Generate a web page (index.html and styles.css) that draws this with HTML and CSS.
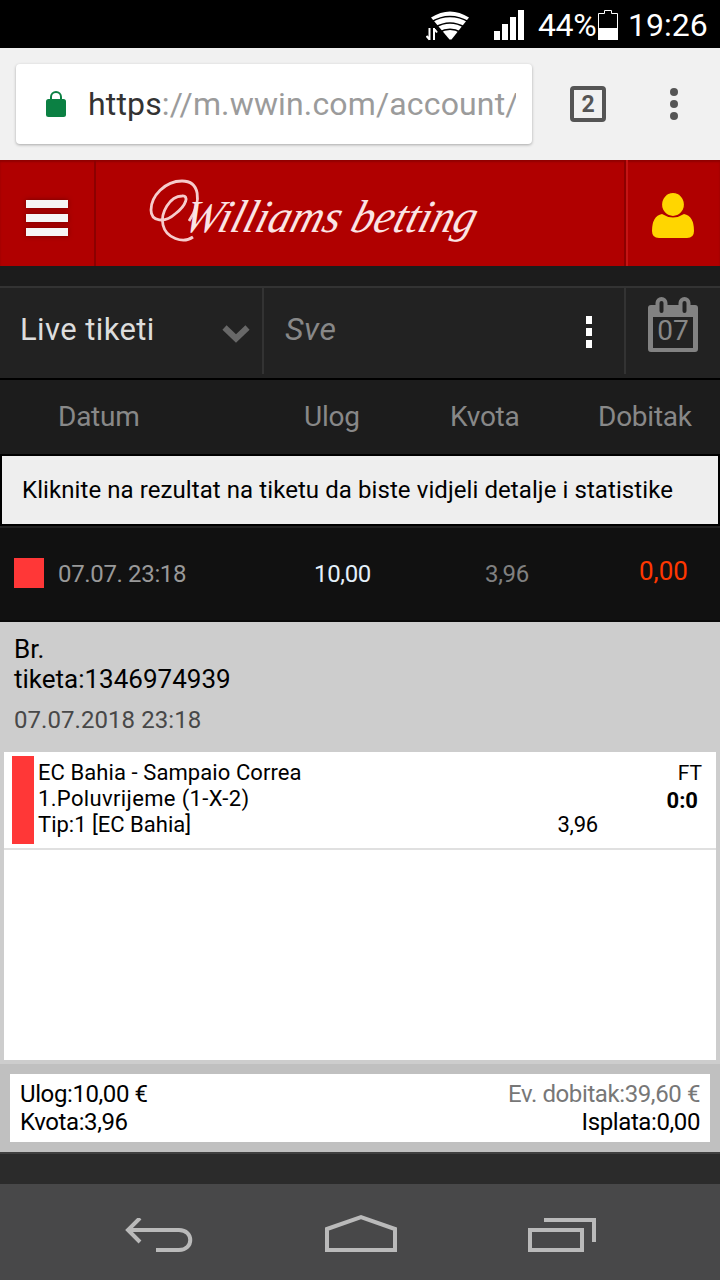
FILE: index.html
```html
<!DOCTYPE html>
<html lang="bs">
<head>
    <meta charset="UTF-8">
    <meta name="viewport" content="width=device-width, initial-scale=1.0">
    <title>Williams betting</title>
    <link rel="stylesheet" href="styles.css">
</head>
<body>
    <!-- Status bar -->
    <div class="status">
        <svg class="wifi" width="44" height="32" viewBox="0 0 44 32">
            <path d="M5 8.500Q24-3.500 43 8.500L25.500 30.500H23.500Z" fill="#fff"/>
            <path d="M5 13Q24 2 43 13M9 18.500Q24 9.500 39 18.500M13 23.500Q24 17 35 23.500" fill="none" stroke="#000" stroke-width="1.700"/>
            <path d="M0 18H9L13 23V32H0Z" fill="#000"/>
            <path d="M3.500 19V31M0.500 27L3.500 30.500M8 31V19M8 19.500L11 23.500" fill="none" stroke="#fff" stroke-width="2"/>
        </svg>
        <svg class="signal" width="30" height="30" viewBox="0 0 30 30" fill="#fff">
            <path d="M0 21h6v9H0zM8 14h6v16H8zM16 7h6v23h-6zM24 0h6v30h-6z"/>
        </svg>
        <span class="percent">44%</span>
        <svg class="battery" width="20" height="30" viewBox="0 0 20 30">
            <path d="M0.500 3.500H6.500V0.500H13.500V3.500H19.500V29.500H0.500Z" fill="none" stroke="#fff"/>
            <path d="M0 18h20v12H0z" fill="#fff"/>
        </svg>
        <span class="clock">19:26</span>
    </div>

    <!-- Browser bar -->
    <div class="browser">
        <div class="address">
            <svg width="20" height="26" viewBox="0 0 20 26">
                <path d="M5 9V6a5 5 0 0 1 10 0v3" fill="none" stroke="#0b8043" stroke-width="2"/>
                <rect y="8" width="20" height="18" rx="2.500" fill="#0b8043"/>
            </svg>
            <div class="url"><b>https</b>://m.wwin.com/account/</div>
        </div>
        <div class="tabs">2</div>
        <svg class="dots" width="8" height="32" viewBox="0 0 8 32" fill="#555">
            <circle cx="4" cy="4" r="4"/><circle cx="4" cy="16" r="4"/><circle cx="4" cy="28" r="4"/>
        </svg>
    </div>

    <!-- Site header -->
    <div class="header">
        <div class="menu-icon">
            <div></div>
            <div></div>
            <div></div>
        </div>
        <div class="brand">
            <svg width="350" height="100" viewBox="0 0 350 100">
                <path d="M44 57C58 36 54 17 37 17C20 17 6 32 6 46C6 58 20 59 30 50C42 41 44 31 37 32C25 32 15 49 18 61C21 74 38 80 48 73" fill="none" stroke="#f6cccc" stroke-width="2.800"/>
                <text class="logo-text" transform="translate(36 68) skewX(-16)" textLength="292" lengthAdjust="spacingAndGlyphs">Williams betting</text>
            </svg>
        </div>
        <div class="user">
            <svg width="44" height="48" viewBox="0 0 44 48" fill="#ffd600">
                <path d="M11 22Q1 24 1 39Q1 46 8 46H36Q43 46 43 39Q43 24 33 22Q22 29 11 22Z"/>
                <ellipse cx="22" cy="12.500" rx="11.500" ry="12" stroke="#b00000" stroke-width="1.200"/>
            </svg>
        </div>
    </div>

    <!-- Filters -->
    <div class="filters">
        <div class="select">
            <span>Live tiketi</span>
            <svg width="28" height="20" viewBox="0 0 28 20">
                <path d="M2.500 3.500L14 14.500L25.500 3.500" fill="none" stroke="#686868" stroke-width="6"/>
            </svg>
        </div>
        <div class="search">
            <i>Sve</i>
            <svg width="8" height="34" viewBox="0 0 8 34" fill="#fff">
                <path d="M1 1h6v8H1zM1 13h6v8H1zM1 25h6v8H1z"/>
            </svg>
        </div>
        <div class="calendar">
            <svg width="52" height="56" viewBox="0 0 52 56">
                <path d="M4 8H48Q51 8 51 11V52Q51 55 48 55H4Q1 55 1 52V11Q1 8 4 8ZM6 20V51H46V20Z" fill="#828282" fill-rule="evenodd"/>
                <path d="M14.500 14V6M37.500 14V6" fill="none" stroke="#828282" stroke-width="12" stroke-linecap="round"/>
                <path d="M14.500 14V6M37.500 14V6" fill="none" stroke="#222" stroke-width="4" stroke-linecap="round"/>
            </svg>
            <span>07</span>
        </div>
    </div>

    <!-- Ticket list -->
    <div class="columns">
        <span class="c-date">Datum</span>
        <span class="c-stake">Ulog</span>
        <span class="c-odds">Kvota</span>
        <span class="c-win">Dobitak</span>
    </div>
    <div class="note"><span>Kliknite na rezultat na tiketu da biste vidjeli detalje i statistike</span></div>
    <div class="ticket">
        <div class="lost"></div>
        <span class="t-date">07.07. 23:18</span>
        <span class="t-stake">10,00</span>
        <span class="t-odds">3,96</span>
        <span class="t-win">0,00</span>
    </div>

    <!-- Ticket details -->
    <div class="details">
        <div class="number">Br.<br><span>tiketa:1346974939</span></div>
        <div class="time">07.07.2018 23:18</div>
        <div class="bets">
            <div class="bet">
                <div class="mark"></div>
                <div class="match">
                    <div><span class="name">EC Bahia - Sampaio Correa</span></div>
                    <div><span class="market">1.Poluvrijeme (1-X-2)</span></div>
                    <div class="tip"><span>Tip:1 [EC Bahia]</span><span class="odds">3,96</span></div>
                </div>
                <div class="result">
                    <div class="period">FT</div>
                    <div class="score">0:0</div>
                </div>
            </div>
        </div>
    </div>
    <div class="total">
        <div class="sum">
            <div><span>Ulog:10,00 €</span><span class="possible">Ev. dobitak:39,60 €</span></div>
            <div><span>Kvota:3,96</span><span>Isplata:0,00</span></div>
        </div>
    </div>
    <div class="page-end"></div>

    <!-- Phone buttons -->
    <div class="nav">
        <svg width="68" height="34" viewBox="0 0 68 34">
            <path d="M15 0L3 12L15 24M3 12H54C69 12 69 32 54 32H31" fill="none" stroke="#bababa" stroke-width="4"/>
        </svg>
        <svg width="72" height="38" viewBox="0 0 72 38">
            <path d="M2 15L36 3L70 15V36H2Z" fill="none" stroke="#bababa" stroke-width="4"/>
        </svg>
        <svg width="68" height="34" viewBox="0 0 68 34">
            <path d="M2 12H54V32H2ZM16 2H66V24" fill="none" stroke="#bababa" stroke-width="4"/>
        </svg>
    </div>
</body>
</html>
```
FILE: styles.css
```css
* {
    box-sizing: border-box;
}
body {
    margin: 0;
    width: 720px;
    height: 1280px;
    overflow: hidden;
    background-color: #1c1c1c;
    font-family: Roboto, "Liberation Sans", sans-serif;
    font-size: 24px;
    color: #000;
    white-space: nowrap;
}
svg {
    display: block;
    flex-shrink: 0;
}

/* Status bar */
.status {
    display: flex;
    align-items: center;
    height: 48px;
    padding: 1px 0 0 426px;
    background-color: #000;
    color: #fff;
    font-size: 32px;
}
.signal {
    margin-left: 24px;
}
.percent {
    width: 59px;
    margin-left: 14px;
    letter-spacing: -0.4px;
}
.battery {
    margin-left: 1px;
}
.clock {
    margin-left: 10px;
}

/* Browser bar */
.browser {
    display: flex;
    align-items: center;
    height: 112px;
    padding-left: 16px;
    background-color: #f1f1f1;
}
.address {
    display: flex;
    align-items: center;
    width: 516px;
    height: 80px;
    padding-left: 30px;
    background-color: #fff;
    border-radius: 4px;
    box-shadow: 0 1px 3px rgba(0, 0, 0, 0.3);
}
.url {
    width: 428px;
    margin-left: 22px;
    overflow: hidden;
    font-size: 32px;
    letter-spacing: 0.15px;
    color: #9b9b9b;
}
.url b {
    font-weight: normal;
    color: #333;
}
.tabs {
    width: 36px;
    height: 36px;
    margin-left: 38px;
    border: 4px solid #555;
    border-radius: 4px;
    color: #555;
    font-size: 23px;
    font-weight: bold;
    line-height: 30px;
    text-align: center;
}
.dots {
    margin-left: 64px;
}

/* Site header */
.header {
    display: flex;
    height: 106px;
    background-color: #b00000;
    box-shadow: inset 0 2px 2px #900000;
}
.menu-icon {
    width: 96px;
    padding: 40px 0 0 26px;
    border-right: 2px solid #8c0000;
}
.menu-icon div {
    width: 42px;
    height: 8px;
    margin-bottom: 6px;
    background-color: #f5f5f5;
    box-shadow: 0 0 5px #700000;
}
.brand {
    width: 530px;
    padding: 4px 0 0 49px;
    border-right: 2px solid #8c0000;
}
.logo-text {
    font-family: "Liberation Serif", serif;
    font-size: 46px;
    font-style: italic;
    fill: #fbe4e4;
}
.user {
    flex: 1;
    padding: 32px 0 0 23px;
    border-left: 2px solid #c41414;
}

/* Filters */
.filters {
    display: flex;
    height: 94px;
    margin-top: 20px;
    padding-bottom: 4px;
    background-color: #222;
    border-top: 2px solid #333;
    border-bottom: 2px solid #000;
}
.select {
    display: flex;
    align-items: center;
    justify-content: space-between;
    width: 264px;
    padding: 0 12px 0 20px;
    border-right: 2px solid #333;
    color: #ddd;
    font-size: 31px;
    letter-spacing: 0.4px;
}
.select span {
    padding-bottom: 4px;
}
.select svg {
    margin-top: 5px;
}
.search {
    display: flex;
    align-items: center;
    justify-content: space-between;
    width: 362px;
    padding: 0 31px 0 21px;
    border-right: 2px solid #333;
    color: #888;
    font-size: 32px;
    letter-spacing: 0.6px;
}
.search i {
    padding-bottom: 4px;
}
.search svg {
    margin-top: 2px;
}
.calendar {
    position: relative;
    padding: 9px 0 0 21px;
}
.calendar span {
    position: absolute;
    top: 26px;
    left: 21px;
    width: 52px;
    color: #888;
    font-size: 28px;
    text-align: center;
}

/* Ticket list */
.columns {
    display: flex;
    align-items: center;
    height: 74px;
    padding: 0 0 2px 58px;
    color: #888;
    font-size: 28px;
    letter-spacing: -0.25px;
}
.c-date {
    width: 246px;
}
.c-stake {
    width: 146px;
}
.c-odds {
    width: 148px;
}
.note {
    height: 72px;
    padding-left: 20px;
    border: 2px solid #000;
    background-color: #eee;
    letter-spacing: 0.08px;
    line-height: 68px;
}
.ticket {
    display: flex;
    align-items: center;
    height: 96px;
    padding-left: 14px;
    border-top: 2px solid #222;
    border-bottom: 2px solid #080808;
    background-color: #111;
    color: #999;
    letter-spacing: -0.35px;
}
.lost {
    width: 30px;
    height: 30px;
    margin-top: -2px;
    background-color: #ff3737;
}
.t-date {
    width: 256px;
    margin-left: 14px;
}
.t-stake {
    width: 171px;
    color: #e4f0fa;
}
.t-odds {
    width: 154px;
    color: #808080;
}
.t-win {
    padding-bottom: 6px;
    color: #ff3700;
    font-size: 26px;
    letter-spacing: 0;
}

/* Ticket details */
.details {
    height: 442px;
    padding: 12px 4px 0;
    background-color: #cdcdcd;
}
.number {
    padding-left: 10px;
    font-size: 26px;
    line-height: 30px;
}
.time {
    margin-top: 12px;
    padding-left: 10px;
    color: #484848;
    letter-spacing: 0.06px;
    line-height: 28px;
}
.bets {
    height: 308px;
    margin-top: 18px;
    background-color: #fff;
}
.bet {
    display: flex;
    height: 98px;
    padding: 4px 8px;
    border-bottom: 2px solid #e0e0e0;
    font-size: 22px;
    line-height: 26px;
}
.mark {
    width: 22px;
    height: 88px;
    background-color: #ff3737;
}
.match {
    width: 564px;
    padding: 4px 0 0 4px;
}
.name {
    letter-spacing: 0.08px;
}
.market {
    letter-spacing: 0.35px;
}
.tip {
    display: flex;
    justify-content: space-between;
}
.odds {
    letter-spacing: -0.2px;
}
.result {
    flex: 1;
    padding-top: 4px;
    text-align: right;
}
.period {
    padding-right: 6px;
    font-size: 21px;
}
.score {
    margin-top: 2px;
    padding-right: 10px;
    font-weight: bold;
}
.total {
    height: 88px;
    padding: 10px;
    background-color: #c0c0c0;
}
.sum {
    height: 68px;
    padding: 6px 10px;
    background-color: #fff;
    letter-spacing: -0.4px;
    line-height: 28px;
}
.sum div {
    display: flex;
    justify-content: space-between;
}
.possible {
    color: #777;
}
.page-end {
    height: 32px;
    border-top: 2px solid #404040;
    background-color: #2b2b2b;
}

/* Phone buttons */
.nav {
    display: flex;
    align-items: flex-end;
    justify-content: space-between;
    height: 96px;
    padding: 0 124px 28px 125px;
    background-color: #484849;
}
```
